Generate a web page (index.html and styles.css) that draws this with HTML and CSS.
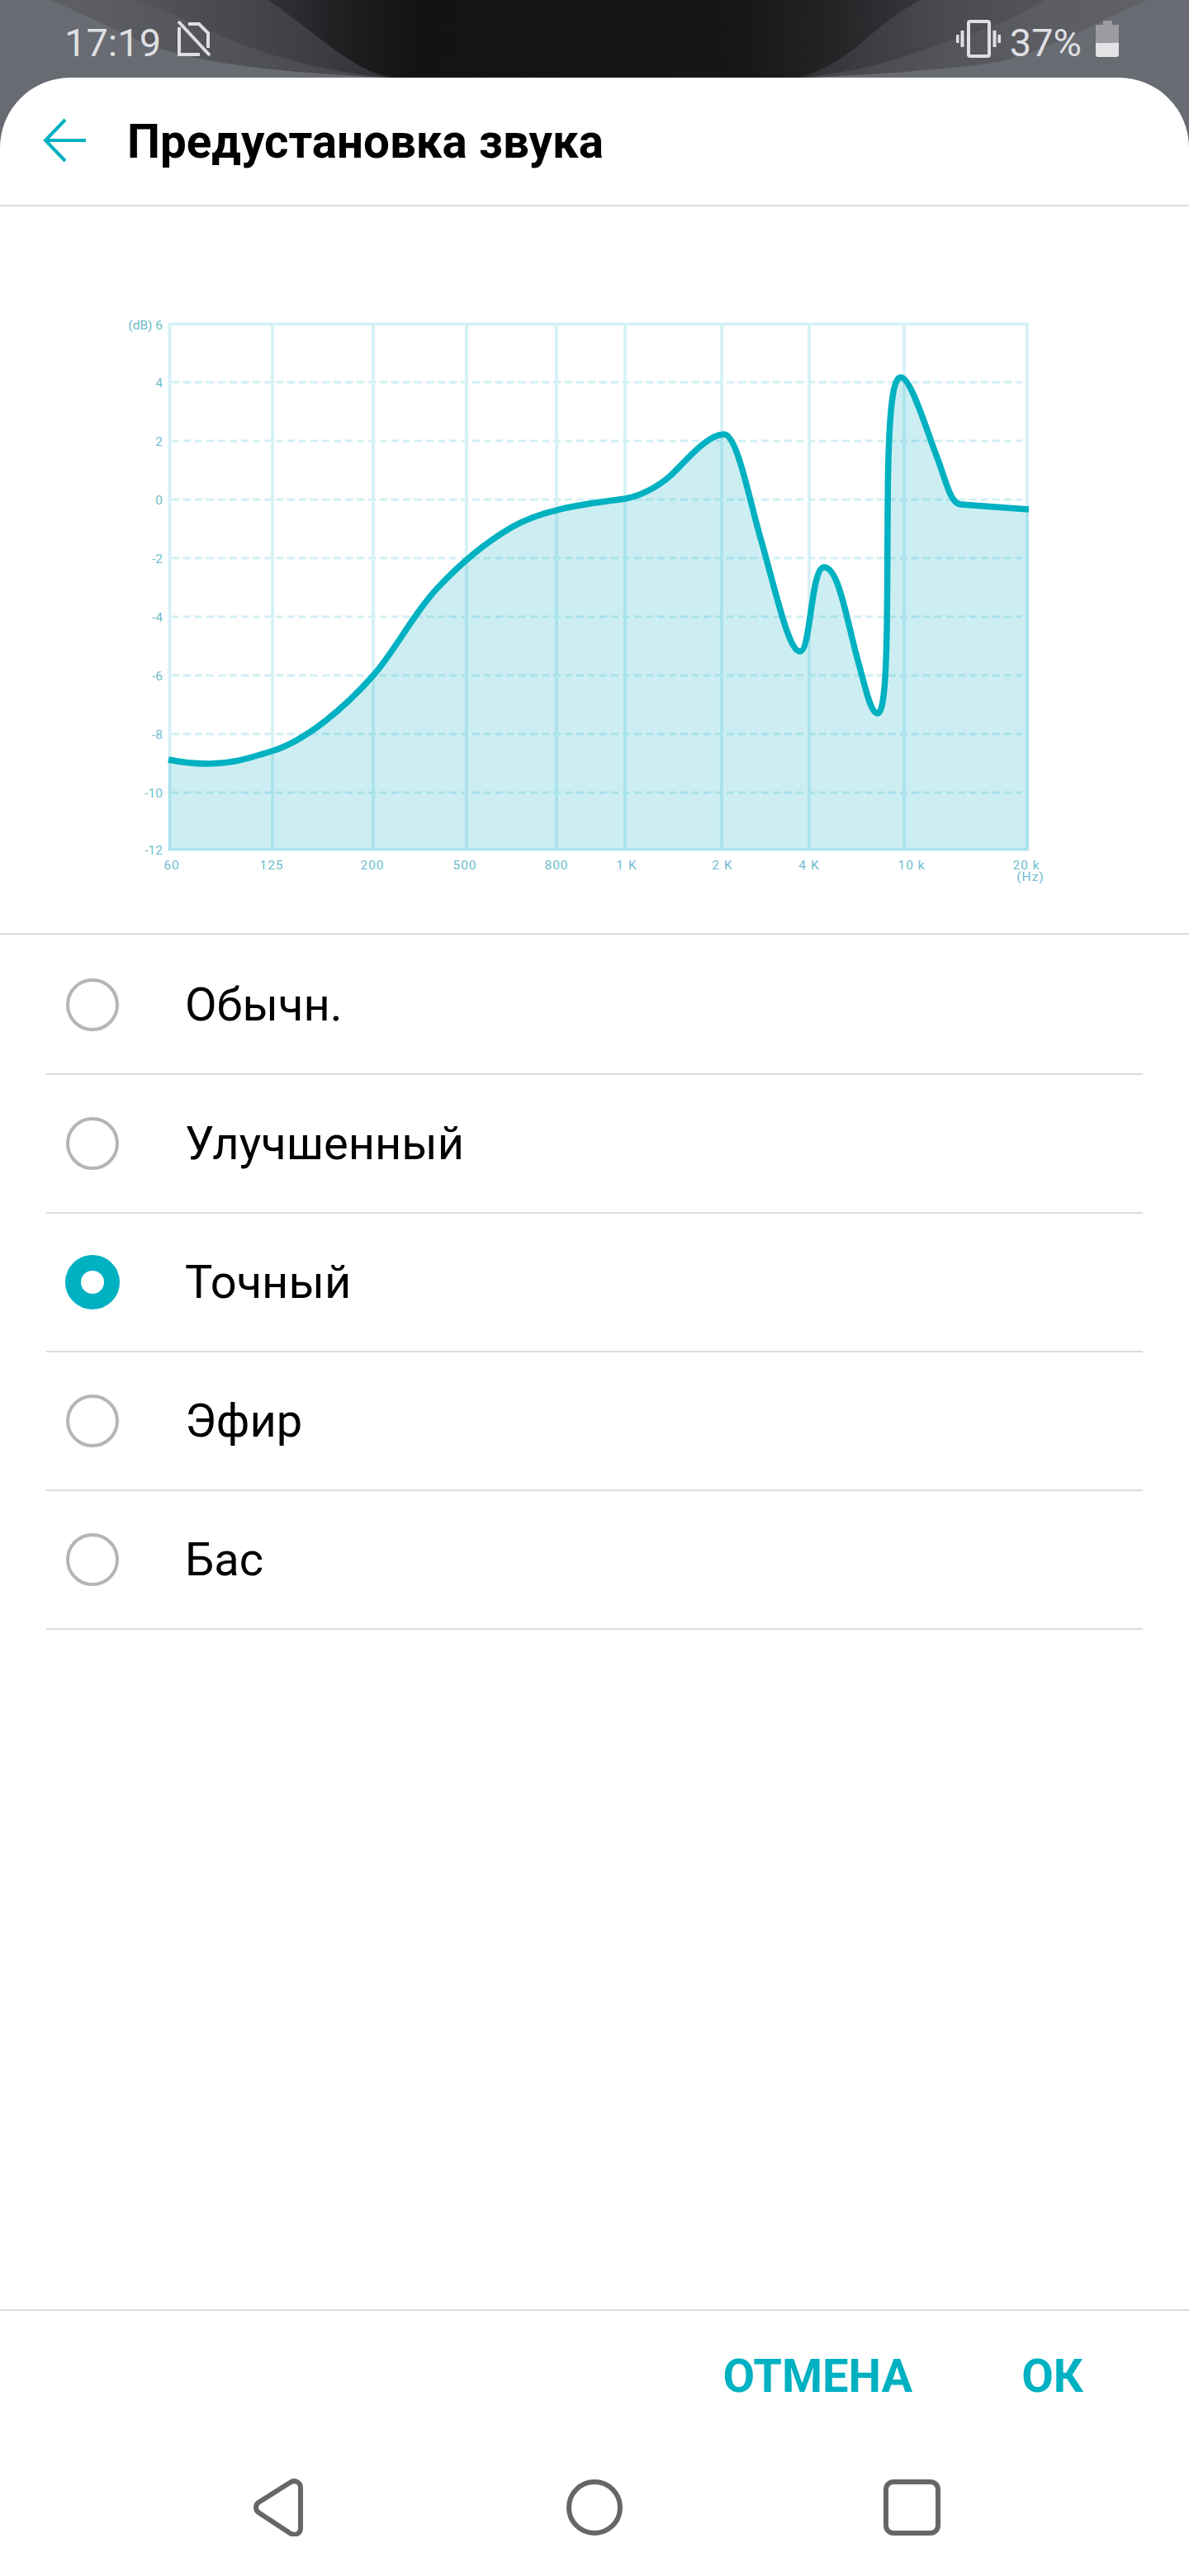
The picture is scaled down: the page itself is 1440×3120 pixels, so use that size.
FILE: index.html
```html
<!DOCTYPE html>
<html lang="ru">
<head>
<meta charset="utf-8">
<title>Предустановка звука</title>
<link rel="stylesheet" href="styles.css">
</head>
<body>
<div class="phone">
  <svg class="wallpaper" width="1440" height="190" viewBox="0 0 1440 190" aria-hidden="true">
    <defs>
      <linearGradient id="g1" gradientUnits="userSpaceOnUse" x1="0" y1="0" x2="1440" y2="0">
        <stop offset="0" stop-color="#62646a"/><stop offset=".15" stop-color="#56575d"/><stop offset=".3" stop-color="#47484c"/>
        <stop offset=".7" stop-color="#47484c"/><stop offset=".85" stop-color="#5a5b61"/><stop offset="1" stop-color="#62646a"/>
      </linearGradient>
      <linearGradient id="g2" gradientUnits="userSpaceOnUse" x1="0" y1="0" x2="1440" y2="0">
        <stop offset=".1" stop-color="#56575c"/><stop offset=".2" stop-color="#47484c"/><stop offset=".32" stop-color="#333437"/>
        <stop offset=".68" stop-color="#333437"/><stop offset=".8" stop-color="#4a4b4f"/><stop offset=".9" stop-color="#56575c"/>
      </linearGradient>
      <linearGradient id="g3" gradientUnits="userSpaceOnUse" x1="0" y1="0" x2="1440" y2="0">
        <stop offset=".22" stop-color="#333437"/><stop offset=".29" stop-color="#1e1f21"/><stop offset=".35" stop-color="#121315"/>
        <stop offset=".62" stop-color="#151618"/><stop offset=".7" stop-color="#232426"/><stop offset=".78" stop-color="#37383b"/>
      </linearGradient>
    </defs>
    <rect class="wall-base" width="1440" height="190"/>
    <path fill="url(#g1)" d="M60 0C110 20 150 43 190 58C270 82 360 88 480 95H965C1050 90 1140 86 1210 75C1280 58 1330 25 1390 0Z"/>
    <path fill="url(#g2)" d="M160 0C200 10 245 35 283 50C340 72 400 88 480 95H965C1020 88 1060 82 1120 60C1160 45 1220 30 1265 0Z"/>
    <path fill="url(#g3)" d="M325 0C360 25 385 45 405 60C430 78 450 90 480 95H965C1000 85 1030 65 1055 42C1075 25 1095 10 1115 0Z"/>
  </svg>

  <header class="status">
    <div class="status-group">
      <span class="clock">17:19</span>
      <svg class="ic" width="44" height="46" viewBox="0 0 44 46" aria-hidden="true">
        <path class="ic-line" d="M4 9V42H29M15 5H28L39 16V34"/>
        <path class="ic-line" d="M3 2L41 43"/>
      </svg>
    </div>
    <div class="status-group">
      <svg class="ic" width="54" height="46" viewBox="0 0 54 46" aria-hidden="true">
        <rect class="ic-line" x="15" y="2" width="25" height="42" rx="2"/>
        <path class="ic-line" d="M7.5 13V33M46.500 13V33M1.500 18V28M52.500 18V28"/>
      </svg>
      <span class="pct">37%</span>
      <svg class="ic batt" width="29" height="46" viewBox="0 0 29 46" aria-hidden="true">
        <path class="batt-empty" d="M0 6H9V1H20V6H28V28H0Z"/>
        <path class="batt-full" d="M0 28H28V42Q28 45 25 45H3Q0 45 0 42Z"/>
      </svg>
    </div>
  </header>

  <main class="sheet">
    <div class="titlebar">
      <svg class="back" width="56" height="56" viewBox="0 0 56 56" aria-hidden="true">
        <path class="back-line" d="M29 3L5 28L29 53M5 28H54"/>
      </svg>
      <h1 class="title">Предустановка звука</h1>
    </div>

    <section class="chart-wrap">
      <svg class="chart" width="1440" height="880" viewBox="0 250 1440 880">
        <g class="grid-h">
          <path d="M208 463H1238M208 534H1238M208 605H1238M208 676H1238M208 747H1238M208 818H1238M208 889H1238M208 960H1238"/>
        </g>
        <g class="grid-v">
          <path d="M205.500 392V1030M330 392V1030M452 392V1030M565 392V1030M674 392V1030M757 392V1030M874 392V1030M980 392V1030M1095 392V1030M1244 392V1030M204 392.500H1246M204 1029H1246"/>
        </g>
        <path class="area" d="M204 920C218 923 235 925 251 925C280 925 300 919 330 909.500C370 897 418 857 452 818C478 789 502 741 530 712C560 680 590 656 619 639C660 615 715 610 757 604C775 601 796 590 811 577C826 564 855 526 877 526C893 526 908 608 922 655C940 718 955 789 969 789C982 789 982 687 998 687C1016 687 1025 750 1040 804C1048 832 1054 864 1063 864C1072 864 1074 800 1074.500 720C1075 640 1075 580 1076 554C1078 490 1082 457 1091 457C1103 457 1122 520 1133 549C1145 578 1150 611 1164 611L1246 617V1030H204Z"/>
        <path class="curve" d="M204 920C218 923 235 925 251 925C280 925 300 919 330 909.500C370 897 418 857 452 818C478 789 502 741 530 712C560 680 590 656 619 639C660 615 715 610 757 604C775 601 796 590 811 577C826 564 855 526 877 526C893 526 908 608 922 655C940 718 955 789 969 789C982 789 982 687 998 687C1016 687 1025 750 1040 804C1048 832 1054 864 1063 864C1072 864 1074 800 1074.500 720C1075 640 1075 580 1076 554C1078 490 1082 457 1091 457C1103 457 1122 520 1133 549C1145 578 1150 611 1164 611L1246 617"/>
        <g class="axis-y">
          <text x="197" y="399">(dB) 6</text>
          <text x="197" y="469">4</text>
          <text x="197" y="540">2</text>
          <text x="197" y="611">0</text>
          <text x="197" y="682">-2</text>
          <text x="197" y="753">-4</text>
          <text x="197" y="824">-6</text>
          <text x="197" y="895">-8</text>
          <text x="197" y="966">-10</text>
          <text x="197" y="1035">-12</text>
        </g>
        <g class="axis-x">
          <text x="208" y="1053">60</text>
          <text x="329" y="1053">125</text>
          <text x="451" y="1053">200</text>
          <text x="563" y="1053">500</text>
          <text x="674" y="1053">800</text>
          <text x="759" y="1053">1 K</text>
          <text x="875" y="1053">2 K</text>
          <text x="980" y="1053">4 K</text>
          <text x="1104" y="1053">10 k</text>
          <text x="1243" y="1053">20 k</text>
          <text x="1248" y="1067">(Hz)</text>
        </g>
      </svg>
    </section>

    <ul class="options">
      <li class="option"><span class="radio"></span><span class="label">Обычн.</span></li>
      <li class="option"><span class="radio"></span><span class="label">Улучшенный</span></li>
      <li class="option"><span class="radio radio-on"></span><span class="label">Точный</span></li>
      <li class="option"><span class="radio"></span><span class="label">Эфир</span></li>
      <li class="option"><span class="radio"></span><span class="label">Бас</span></li>
    </ul>

    <div class="actions">
      <span class="action">ОТМЕНА</span>
      <span class="action">ОК</span>
    </div>

    <nav class="navbar">
      <svg class="nav-ic" width="70" height="70" viewBox="0 0 70 70" aria-hidden="true">
        <path d="M64 11V60C64 67 57 70 51 66L13 41C9 38 9 32 13 29L51 5C57 1 64 4 64 11Z"/>
      </svg>
      <svg class="nav-ic" width="70" height="70" viewBox="0 0 70 70" aria-hidden="true">
        <circle cx="35" cy="35" r="31"/>
      </svg>
      <svg class="nav-ic" width="70" height="70" viewBox="0 0 70 70" aria-hidden="true">
        <rect x="3" y="4" width="63" height="62" rx="9"/>
      </svg>
    </nav>
  </main>
</div>
</body>
</html>
```
FILE: styles.css
```css
* { box-sizing: border-box; }
html, body { margin: 0; padding: 0; }
body { font-family: Roboto, "Noto Sans", sans-serif; background: #fff; }

.phone {
  position: relative;
  width: 1440px;
  height: 3120px;
  display: flex;
  flex-direction: column;
  overflow: hidden;
  background: #696b72;
}
.wallpaper { position: absolute; top: 0; left: 0; }
.wall-base { fill: #696b72; }

.status {
  position: relative;
  height: 94px;
  flex: none;
  display: flex;
  justify-content: space-between;
  align-items: flex-start;
  padding: 24px 84px 0 78px;
  color: #dedfe1;
  font-size: 47px;
  line-height: 50px;
}
.status-group { display: flex; align-items: flex-start; }
.clock { margin-top: 3px; }
.pct { margin: 3px 17px 0 11px; }
.ic { display: block; margin-left: 18px; }
.status-group:last-child .ic:first-child { margin-left: 0; }
.ic-line { fill: none; stroke: #dedfe1; stroke-width: 4; }
.batt { margin: 0; }
.batt-empty { fill: #9b9ca1; }
.batt-full { fill: #e2e3e5; }

.sheet {
  position: relative;
  flex: 1;
  display: flex;
  flex-direction: column;
  background: #fff;
  border-radius: 85px 85px 0 0;
}

.titlebar {
  height: 156px;
  flex: none;
  display: flex;
  align-items: center;
  padding: 0 0 0 50px;
  border-bottom: 2px solid #dcdcdc;
}
.back { display: block; flex: none; margin-top: -2px; }
.back-line { fill: none; stroke: #00b1c1; stroke-width: 4; }
.title {
  margin: 2px 0 0 48px;
  font-size: 56.500px;
  font-weight: 700;
  line-height: 64px;
  color: #000;
}

.chart-wrap {
  height: 882px;
  flex: none;
  border-bottom: 2px solid #dcdcdc;
}
.chart { display: block; }
.grid-h path { fill: none; stroke: #d2f0f5; stroke-width: 3; stroke-dasharray: 9 5; }
.grid-v path { fill: none; stroke: #d6f2f7; stroke-width: 4; }
.area { fill: #00a9bd; fill-opacity: .2; stroke: none; }
.curve { fill: none; stroke: #00b1c1; stroke-width: 7.500; stroke-linejoin: round; }
.axis-y text, .axis-x text {
  font-family: Roboto, sans-serif;
  font-size: 15.500px;
  fill: #6dbccd;
}
.axis-y text { text-anchor: end; }
.axis-x text { text-anchor: middle; letter-spacing: 1px; }

.options {
  list-style: none;
  margin: 0;
  padding: 2px 56px 0;
  flex: 1;
}
.option {
  height: 168.100px;
  display: flex;
  align-items: center;
  border-bottom: 2px solid #dcdcdc;
}
.radio {
  width: 64px;
  height: 64px;
  flex: none;
  margin: 0 0 0 24px;
  border: 4px solid #b5b5b5;
  border-radius: 50%;
}
.radio-on {
  border: 19px solid #00b1c1;
  background: #fff;
  width: 66px;
  height: 66px;
  margin: 0 -1px 0 23px;
}
.label {
  margin-left: 80px;
  font-size: 56px;
  line-height: 64px;
  color: #000;
}

.actions {
  height: 155px;
  flex: none;
  display: flex;
  justify-content: flex-end;
  align-items: center;
  gap: 132px;
  padding: 4px 128px 0 0;
  border-top: 2px solid #dcdcdc;
}
.action {
  font-size: 56px;
  font-weight: 700;
  line-height: 64px;
  color: #00b1c1;
}

.navbar {
  height: 168px;
  flex: none;
  display: flex;
  justify-content: center;
  gap: 315px;
  padding: 0 0 48px;
  align-items: flex-end;
}
.nav-ic { display: block; flex: none; }
.nav-ic path, .nav-ic circle, .nav-ic rect { fill: none; stroke: #666; stroke-width: 6; }
```
